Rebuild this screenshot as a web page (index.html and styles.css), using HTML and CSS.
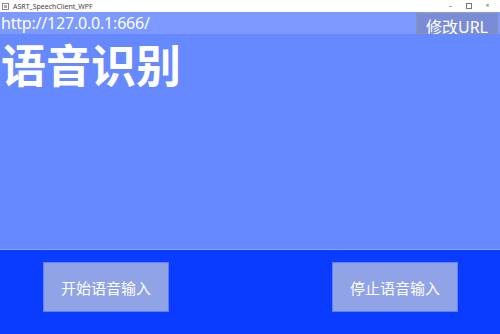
FILE: index.html
```html
<!DOCTYPE html>
<html lang="zh-CN">

<head>
    <meta charset="UTF-8">
    <meta name="viewport" content="width=device-width, initial-scale=1.0">
    <title>ASRT_SpeechClient_WPF</title>
    <link rel="stylesheet" href="styles.css">
</head>

<body>
    <div class="window">
        <div class="titlebar">
            <div class="app-title">
                <svg class="app-icon" width="7" height="7" viewBox="0 0 7 7">
                    <rect x="0.5" y="0.5" width="6" height="6" fill="#fff" stroke="#888" stroke-width="1" />
                    <rect x="2" y="2" width="3" height="3" fill="#aaa" />
                </svg>
                <span>ASRT_SpeechClient_WPF</span>
            </div>
            <div class="controls">
                <span class="ctl">&#8211;</span>
                <span class="ctl ctl-max"></span>
                <span class="ctl">&#215;</span>
            </div>
        </div>

        <div class="url-bar">
            <span class="url-text">http://127.0.0.1:666/</span>
            <button class="url-btn">修改URL</button>
        </div>

        <div class="main">
            <h1>语音识别</h1>
        </div>

        <div class="bottom">
            <button class="action">开始语音输入</button>
            <button class="action">停止语音输入</button>
        </div>
    </div>
</body>

</html>
```

FILE: styles.css
```css
body {
    margin: 0;
    font-family: 'Noto Sans', 'Noto Sans CJK SC', sans-serif;
    background-color: #fff;
}

.window {
    width: 500px;
    height: 334px;
    display: flex;
    flex-direction: column;
    overflow: hidden;
}

.titlebar {
    height: 12px;
    display: flex;
    justify-content: space-between;
    align-items: center;
    background-color: #fff;
}

.app-title {
    display: flex;
    align-items: center;
    gap: 4px;
    padding-left: 2px;
    font-size: 7px;
    color: #444;
}

.controls {
    display: flex;
    align-items: center;
    gap: 9px;
    padding-right: 8px;
    font-size: 7px;
    color: #666;
}

.ctl {
    width: 9px;
    text-align: center;
    line-height: 8px;
}

.ctl-max {
    width: 4px;
    height: 4px;
    border: 1px solid #777;
    margin: 0 2px;
}

.url-bar {
    height: 22px;
    display: flex;
    justify-content: space-between;
    align-items: center;
    background-color: #7c9aff;
}

.url-text {
    padding-left: 1px;
    font-size: 16px;
    letter-spacing: -0.2px;
    color: #fff;
}

.url-btn {
    width: 82px;
    height: 21px;
    margin-right: 2px;
    padding: 0;
    font-family: inherit;
    font-size: 16px;
    color: #fff;
    background-color: #7a8cd6;
    border: 1px solid #8d93a8;
}

.main {
    flex: 1;
    background-color: #6689ff;
    border-bottom: 1px solid #86a3ff;
}

h1 {
    margin: 0;
    padding: 3px 0 0 1px;
    font-size: 45px;
    font-weight: bold;
    line-height: 58px;
    color: #fff;
}

.bottom {
    height: 84px;
    display: flex;
    justify-content: space-between;
    align-items: flex-start;
    padding: 12px 42px 0 43px;
    box-sizing: border-box;
    background-color: #0a3cff;
}

.action {
    width: 126px;
    height: 50px;
    padding: 0;
    font-family: inherit;
    font-size: 15px;
    color: #fff;
    background-color: #8fa3e6;
    border: 1px solid #5f80ee;
}
```
